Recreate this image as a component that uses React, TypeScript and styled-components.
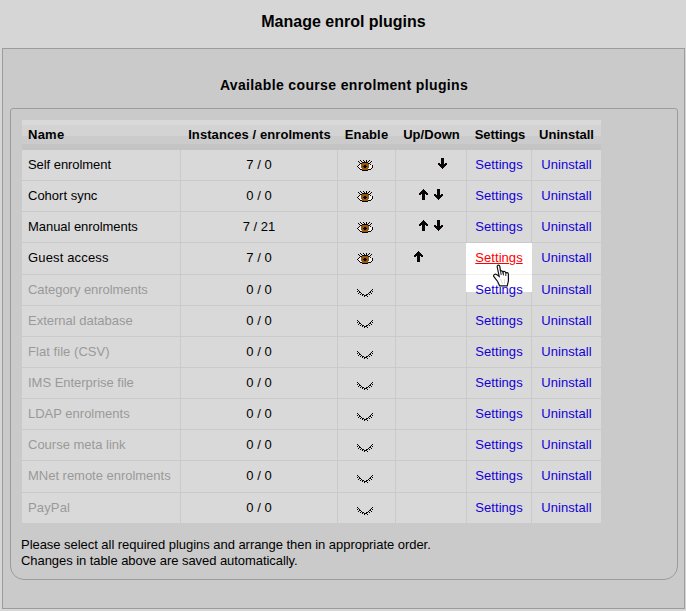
import React from "react";
import styled, { createGlobalStyle } from "styled-components";

const GlobalStyle = createGlobalStyle`
  * { box-sizing: border-box; }
  body {
    margin: 0;
    background: #d6d6d6;
    color: #000;
    font: 13px/16px "Liberation Sans", Arial, sans-serif;
  }
`;

const Page = styled.div`
  height: 611px;
  padding: 12px 1px 2px 2px;
  display: flex;
  flex-direction: column;
`;

const PageTitle = styled.h1`
  margin: 0;
  height: 36px;
  font-size: 16px;
  line-height: 19px;
  text-align: center;
`;

const Panel = styled.main`
  height: 561px;
  padding: 27px 6px 0 7px;
  background: #cacaca;
  border: 1px solid #9c9c9c;
`;

const SectionTitle = styled.h2`
  margin: 0;
  height: 32px;
  font-size: 14px;
  line-height: 18px;
  letter-spacing: 0.36px;
  text-align: center;
`;

const Box = styled.section`
  height: 472px;
  padding: 11px 11px 0;
  border: 1px solid #9c9c9c;
  border-radius: 3px 3px 14px 14px;
`;

const Table = styled.div`
  width: 579px;
`;

const columns = "159px 157px 58px 71px 65px 69px";

const HeaderRow = styled.div`
  display: grid;
  grid-template-columns: ${columns};
  height: 30px;
  line-height: 29px;
  font-weight: bold;
  background: linear-gradient(#d9d9d9 0 5px, #d3d3d3 5px 16px, #cbcbcb 16px 24px, #c4c4c4 24px 30px);
`;

const Row = styled.div<{ $height: number }>`
  display: grid;
  grid-template-columns: ${columns};
  height: ${(p) => p.$height}px;
  background: #d9d9d9;
  border-bottom: 1px solid #cacaca;
  &:last-child { border-bottom: 0; }
`;

const Cell = styled.div<{ $left?: boolean; $dim?: boolean }>`
  position: relative;
  display: flex;
  justify-content: ${(p) => (p.$left ? "flex-start" : "center")};
  padding: 7px 0 0 ${(p) => (p.$left ? 6 : 0)}px;
  color: ${(p) => (p.$dim ? "#999" : "#000")};
  border-right: 1px solid #cacaca;
  white-space: nowrap;
  &:last-child { border-right: 0; }
`;

const HeadCell = styled.div<{ $left?: boolean; $nudge?: number }>`
  text-align: ${(p) => (p.$left ? "left" : "center")};
  padding-left: ${(p) => (p.$left ? 6 : p.$nudge && p.$nudge > 0 ? p.$nudge : 0)}px;
  padding-right: ${(p) => (p.$nudge && p.$nudge < 0 ? -p.$nudge : 0)}px;
  white-space: nowrap;
`;

const Label = styled.span<{ $track?: number }>`
  letter-spacing: ${(p) => p.$track ?? 0}px;
`;

const Link = styled.a<{ $hover?: boolean }>`
  position: relative;
  z-index: 1;
  height: 16px;
  letter-spacing: 0.05px;
  color: ${(p) => (p.$hover ? "#f00" : "#1200d6")};
  text-decoration: ${(p) => (p.$hover ? "underline" : "none")};
`;

const Arrows = styled.div`
  display: flex;
  gap: 6px;
  padding-top: 1px;
`;

const Spacer = styled.span<{ $width: number }>`
  width: ${(p) => p.$width}px;
`;

const Spotlight = styled.div`
  position: absolute;
  z-index: 1;
  left: 0;
  top: 0;
  margin-left: -1px;
  width: 66px;
  height: 49px;
  background: linear-gradient(#fff 0 31px, #f0f0f0 31px 32px, #fff 32px);
`;

const Pointer = styled.svg`
  position: absolute;
  z-index: 2;
  left: 25px;
  top: 21px;
`;

const Note = styled.p`
  margin: 14px 0 0 -1px;
`;

const palette: Record<string, string> = { "#": "#0a0508", o: "#94580c", w: "#f4f4f4" };

const eyeOpen = [
  "...#..#..#..#...",
  ".#..#..#.#.#..#.",
  "..#..######..#..",
  "...##oooooo##...",
  "..#woooooooow#..",
  ".#wwooo##ooowww#",
  "#wwwoo####oowww#",
  ".#wwooo##ooowww#",
  "..#wwoooooowww#.",
  "...##oooooo###..",
  ".....######.....",
];

const eyeClosed = [
  "#..............#",
  ".#............#.",
  "#.#..........#.#",
  "..##........##..",
  ".#..#......#..#.",
  "...#.##..##.#...",
  ".....#.###......",
  ".......#..#.....",
];

const arrowUp = [
  "....#....",
  "...###...",
  "..#####..",
  ".#######.",
  "#########",
  "##.###.##",
  "...###...",
  "...###...",
  "...###...",
  "...###...",
  "...###...",
];

const arrowDown = [...arrowUp].reverse();

function PixelIcon({ rows }: { rows: string[] }) {
  return (
    <svg width={rows[0].length} height={rows.length} shapeRendering="crispEdges">
      {rows.flatMap((row, y) =>
        [...row].map((c, x) =>
          c === "." ? null : <rect key={`${x}-${y}`} x={x} y={y} width="1" height="1" fill={palette[c]} />
        )
      )}
    </svg>
  );
}

const EyeSlot = styled.div<{ $closed: boolean }>`
  height: 16px;
  padding-top: ${(p) => (p.$closed ? 7 : 3)}px;
  margin-right: 3px;
  line-height: 0;
`;

type Plugin = {
  name: string;
  count: string;
  enabled?: boolean;
  up?: boolean;
  down?: boolean;
  height?: number;
  active?: boolean;
  track?: number;
};

const plugins: Plugin[] = [
  { name: "Self enrolment", count: "7 / 0", enabled: true, down: true, track: -0.06 },
  { name: "Cohort sync", count: "0 / 0", enabled: true, up: true, down: true },
  { name: "Manual enrolments", count: "7 / 21", enabled: true, up: true, down: true, track: -0.05 },
  { name: "Guest access", count: "7 / 0", enabled: true, up: true, height: 32, active: true, track: 0.15 },
  { name: "Category enrolments", count: "0 / 0", track: -0.05 },
  { name: "External database", count: "0 / 0" },
  { name: "Flat file (CSV)", count: "0 / 0", track: 0.05 },
  { name: "IMS Enterprise file", count: "0 / 0", track: -0.02 },
  { name: "LDAP enrolments", count: "0 / 0" },
  { name: "Course meta link", count: "0 / 0" },
  { name: "MNet remote enrolments", count: "0 / 0", height: 32, track: -0.02 },
  { name: "PayPal", count: "0 / 0", height: 30, track: 0.15 },
];

const headings = [
  { text: "Name", track: 0.25 },
  { text: "Instances / enrolments", track: 0.08, nudge: 0 },
  { text: "Enable", track: 0.15, nudge: -1 },
  { text: "Up/Down", track: 0.06 },
  { text: "Settings", track: -0.1, nudge: 1 },
  { text: "Uninstall", track: 0 },
];

function HandPointer() {
  return (
    <Pointer width="18" height="23" viewBox="0 0 18 23">
      <path
        d="M6.5 1.2C5.5 1.2 5 2 5.2 3L7.2 12.4L4.6 10.6C3.2 9.7 1.2 10.6 1.6 12.2L5.6 17.5L7.6 21.8H15.2L16.4 17V10.2C16.4 8.6 14.4 8 13.8 9.4C13.8 7.2 11.6 6.8 11 8.4C10.6 6.6 9 6.4 8.6 7.6L7.8 2.4C7.6 1.5 7.2 1.2 6.5 1.2Z"
        fill="#fff"
        stroke="#111"
        strokeWidth="1.2"
      />
      <path d="M8.6 7.6L9.2 11M11.2 8.4L11.5 11.4M13.8 9.4V12" stroke="#222" fill="none" />
      <path d="M8.5 15L10.5 20M12.5 15V20" stroke="#ddd" fill="none" />
    </Pointer>
  );
}

export default function App() {
  return (
    <>
      <GlobalStyle />
      <Page>
        <PageTitle>Manage enrol plugins</PageTitle>
        <Panel>
          <SectionTitle>Available course enrolment plugins</SectionTitle>
          <Box>
            <Table>
              <HeaderRow>
                {headings.map((h, i) => (
                  <HeadCell key={h.text} $left={i === 0} $nudge={h.nudge}>
                    <Label $track={h.track}>{h.text}</Label>
                  </HeadCell>
                ))}
              </HeaderRow>
              {plugins.map((p) => (
                <Row key={p.name} $height={p.height ?? 31}>
                  <Cell $left $dim={!p.enabled}>
                    <Label $track={p.track}>{p.name}</Label>
                  </Cell>
                  <Cell>{p.count}</Cell>
                  <Cell>
                    <EyeSlot $closed={!p.enabled}>
                      <PixelIcon rows={p.enabled ? eyeOpen : eyeClosed} />
                    </EyeSlot>
                  </Cell>
                  <Cell>
                    <Arrows>
                      {p.up ? <PixelIcon rows={arrowUp} /> : p.down && <Spacer $width={17} />}
                      {p.down ? <PixelIcon rows={arrowDown} /> : p.up && <Spacer $width={19} />}
                    </Arrows>
                  </Cell>
                  <Cell>
                    {p.active && <Spotlight />}
                    <Link $hover={p.active}>Settings</Link>
                    {p.active && <HandPointer />}
                  </Cell>
                  <Cell>
                    <Link>Uninstall</Link>
                  </Cell>
                </Row>
              ))}
            </Table>
            <Note>
              <Label $track={-0.04}>
                Please select all required plugins and arrange then in appropriate order.
              </Label>
              <br />
              <Label $track={-0.06}>Changes in table above are saved automatically.</Label>
            </Note>
          </Box>
        </Panel>
      </Page>
    </>
  );
}
